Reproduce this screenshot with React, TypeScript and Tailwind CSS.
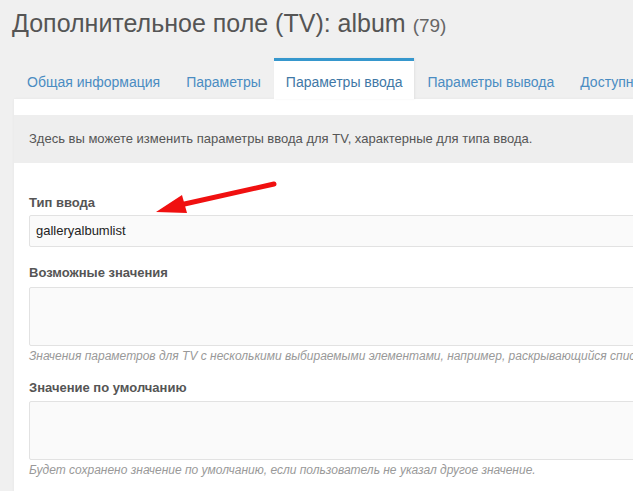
import React from "react";

const tabs = [
  { label: "Общая информация", active: false },
  { label: "Параметры", active: false },
  { label: "Параметры ввода", active: true },
  { label: "Параметры вывода", active: false },
  { label: "Доступные", active: false },
];

export default function App() {
  return (
    <div
      className="relative w-[633px] h-[491px] overflow-hidden bg-[#f0f0f0] text-[#555]"
      style={{ fontFamily: '"Liberation Sans", Arial, sans-serif' }}
    >
      <h1 className="pl-[12px] pt-[8px] text-[25px] leading-[30px] text-[#555] whitespace-nowrap">
        Дополнительное поле (TV): album <span className="text-[19px] text-[#666]">(79)</span>
      </h1>

      <div className="mt-[17px] ml-[14px] flex whitespace-nowrap">
        {tabs.map((t) =>
          t.active ? (
            <div
              key={t.label}
              className="h-[41px] px-[12px] pt-[11px] bg-white border-t-[3px] border-[#3697cd] text-[14px] text-[#3f78a6] shadow-[1px_0_2px_rgba(0,0,0,0.06)]"
            >
              {t.label}
            </div>
          ) : (
            <div key={t.label} className="h-[41px] px-[13px] pt-[14px] text-[14px] text-[#4a8cc2]">
              {t.label}
            </div>
          )
        )}
      </div>

      <div className="ml-[14px] w-[720px] bg-white pt-[16px] h-[400px] shadow-[0_0_3px_rgba(0,0,0,0.05)]">
        <div className="h-[48px] bg-[#eeeeee] pl-[15px] flex items-center text-[13px] text-[#555] whitespace-nowrap">
          Здесь вы можете изменить параметры ввода для TV, характерные для типа ввода.
        </div>

        <div className="pl-[15px] pt-[32px]">
          <div className="text-[13px] font-bold leading-[16px] text-[#555]">Тип ввода</div>
          <div className="mt-[4px] h-[32px] rounded-[2px] border border-[#e2e2e2] bg-[#fafafa] pl-[6px] flex items-center text-[13px] text-[#222]">
            galleryalbumlist
          </div>

          <div className="mt-[18px] text-[13px] font-bold leading-[16px] text-[#555]">Возможные значения</div>
          <div className="mt-[6px] h-[59px] rounded-[2px] border border-[#e2e2e2] bg-[#fafafa]" />
          <div className="mt-[2px] text-[12px] italic leading-[16px] text-[#999] whitespace-nowrap">
            Значения параметров для TV с несколькими выбираемыми элементами, например, раскрывающийся список.
          </div>

          <div className="mt-[16px] text-[13px] font-bold leading-[16px] text-[#555]">Значение по умолчанию</div>
          <div className="mt-[5px] h-[59px] rounded-[2px] border border-[#e2e2e2] bg-[#fafafa]" />
          <div className="mt-[2px] text-[12px] italic leading-[16px] text-[#999] whitespace-nowrap">
            Будет сохранено значение по умолчанию, если пользователь не указал другое значение.
          </div>
        </div>
      </div>

      <svg className="absolute left-0 top-0 pointer-events-none" width="633" height="491">
        <line x1="274" y1="184" x2="180" y2="205" stroke="#f01010" strokeWidth="5" strokeLinecap="round" />
        <polygon points="156,212 182,195 187,213" fill="#f01010" />
      </svg>
    </div>
  );
}
